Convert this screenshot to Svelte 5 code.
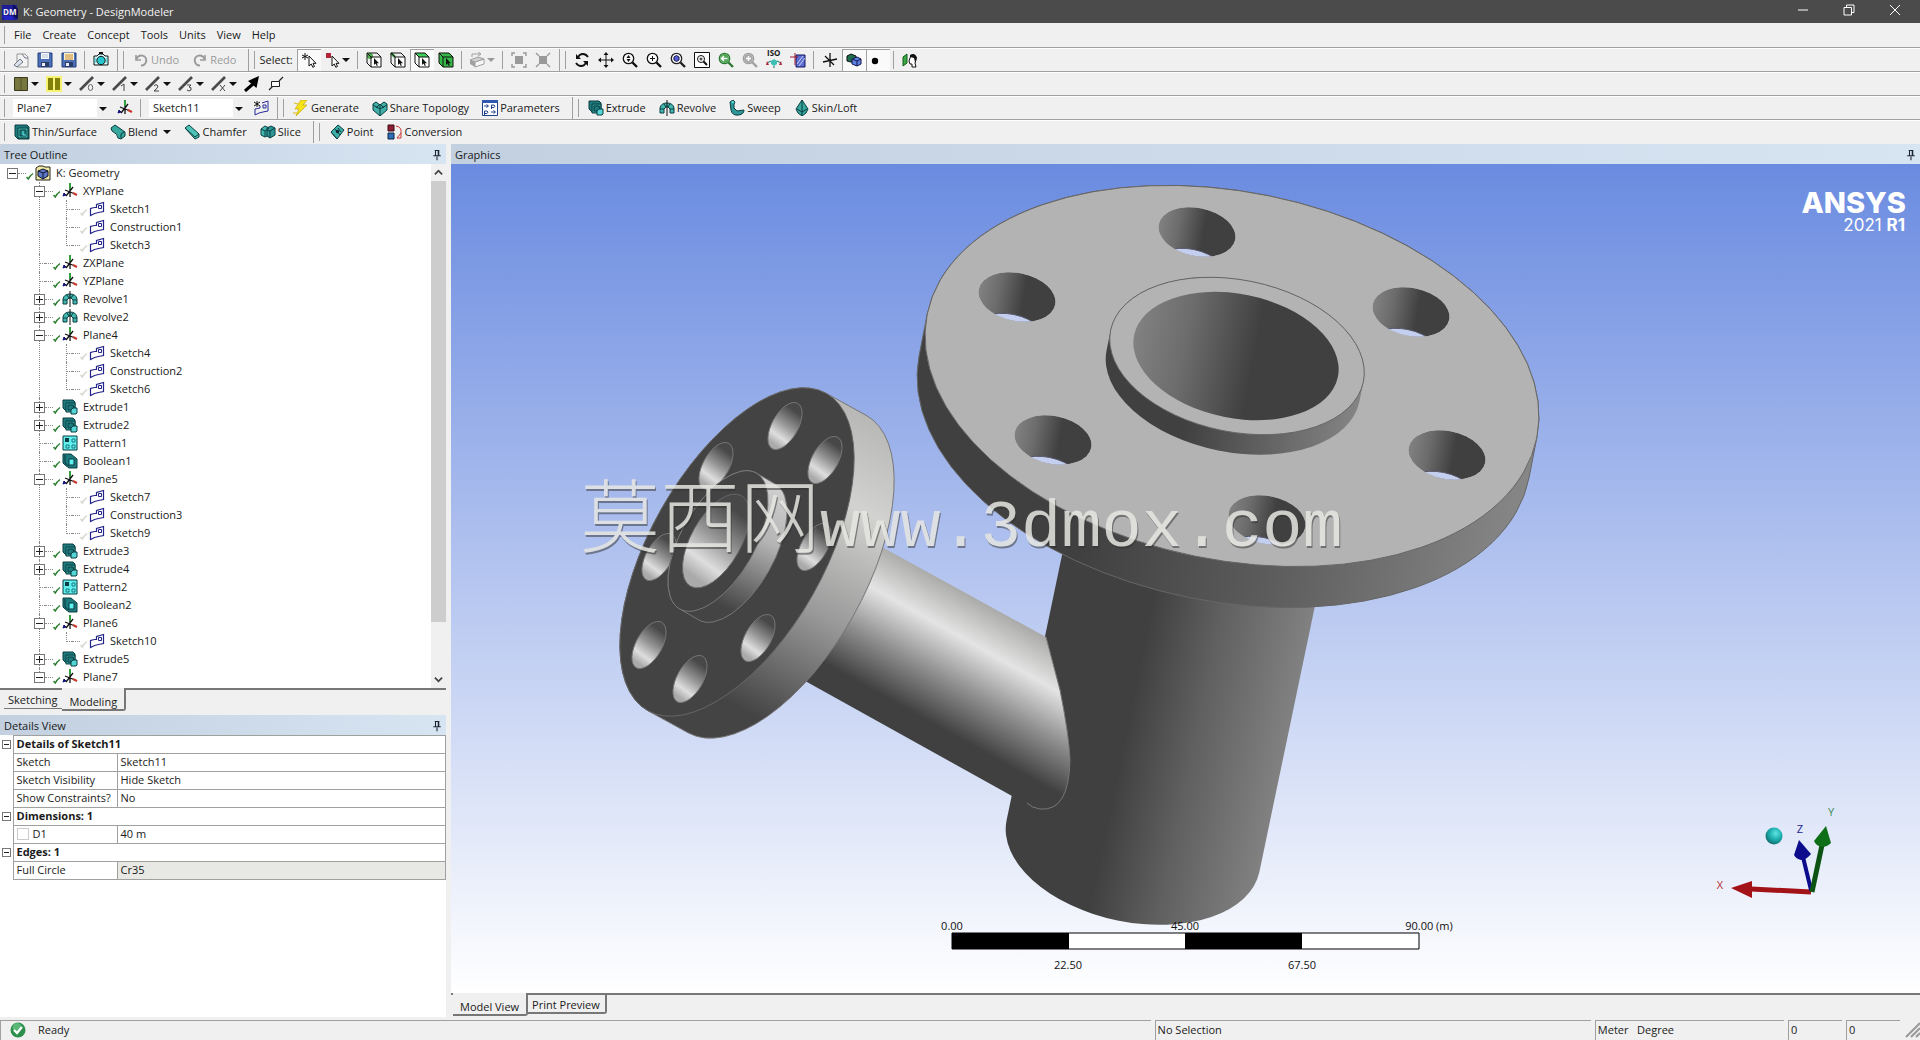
<script>
	const menus = ['File', 'Create', 'Concept', 'Tools', 'Units', 'View', 'Help'];

	const axes =
		'<path d="M3 7l10 4M11 4l-7 9M8 2v12" stroke="#111" stroke-width="1.3"/><path d="M8 0v6" stroke="#2f9e3c" stroke-width="2"/><path d="M11 10l4 2" stroke="#c8382c" stroke-width="2"/><path d="M1 13l1-3 2 2z" fill="#14147a" stroke="#14147a"/>';
	const cursor = '<path d="M8 4v10l2.3-2 1.5 3.3 1.7-.8-1.5-3.2H15z" fill="#fff" stroke="#111"/>';
	const cube = (faces) =>
		`${faces}<path d="M5 5h10v10H5zM5 5L1 1h10l4 4M1 1v10l4 4" stroke="#111"/><path d="M8 6v7l1.6-1.4 1.2 2.4 1-.6-1.1-2.2H13z" fill="#111"/>`;
	const lens = (color, inner) =>
		`<circle cx="6.5" cy="6.5" r="5.2" stroke="${color}" stroke-width="1.3" fill="#fafafa"/><path d="M10.5 10.5L15 15" stroke="${color}" stroke-width="2.4"/>${inner}`;
	const edge = (mark) => `<path d="M1 14L14 1" stroke="#4a4a4a" stroke-width="2.6"/>${mark}`;
	const floppy =
		'<path d="M1 1h14v14H1z" fill="#4d6fb5" stroke="#233f7d"/><path d="M4 10h8v5H4z" fill="#2b3d66"/><path d="M5 11h3v3H5z" fill="#eef"/>';
	const extrude =
		'<path d="M1 1h10l2 2v9h-9l-3-3z" fill="#1d7a7c" stroke="#0a3d40"/><path d="M4 4h9v9H4z" fill="#2f9797" stroke="#0a3d40"/><path d="M6 6h5l1 4-4 1-2 0z" fill="#1d7a7c" stroke="#0a3d40"/><path d="M9 11l2-2h4v5l-1 1H9z" fill="#54d6d6" stroke="#0a3d40"/>';
	const revolve =
		'<path d="M1 13V8q1-5 7-5 6 0 7 5v5l-4 0V9l-2-2H7L5 9v4z" fill="#42b8b0" stroke="#0a3d40"/><path d="M5 9l-4 0M11 9h4M5 4l2 3M11 4L9 7" stroke="#0a3d40"/><path d="M8 0v16" stroke="#111"/>';

	const icons = {
		dm: '<path d="M0 1h15v15H0z" fill="#1c1c96"/><path d="M11 0l5 5v10l-5-3z" fill="#0d0d5c"/><path d="M0 12h11v4H3z" fill="#2424c4"/>',
		fresh: '<path d="M4 2h8l3 3v10H4z" fill="#f3f3f3" stroke="#999"/><path d="M1 13l6-6 3 3-6 5z" fill="#dde3ee" stroke="#6d7685"/><path d="M9 2l3 4h3" stroke="#778"/>',
		save: `${floppy}<path d="M4 1h8v6H4z" fill="#f5f7fb"/><path d="M5 3h6M5 5h6" stroke="#b9c5dd"/>`,
		saveAll: `${floppy}<path d="M3 1h10v7H3z" fill="#fbf3d8"/><path d="M4 3h8M4 5h8M4 7h8" stroke="#c58a2a"/>`,
		camera: '<path d="M1 4h3l2-2h4l2 2h3v9H1z" fill="#dff" stroke="#111"/><path d="M6 0h4v2H6z" fill="#111"/><circle cx="8" cy="8.5" r="4.2" fill="#26c6cf" stroke="#111"/><path d="M2 6v5M14 6v5" stroke="#28b3bb"/>',
		undo: '<path d="M3 3v5h5" stroke="#9a9a9a" stroke-width="1.6"/><path d="M3.5 7A5 5 0 1 1 8 13.5" stroke="#9a9a9a" stroke-width="2"/>',
		redo: '<path d="M13 3v5H8" stroke="#9a9a9a" stroke-width="1.6"/><path d="M12.5 7A5 5 0 1 0 8 13.5" stroke="#9a9a9a" stroke-width="2"/>',
		pick: `<path d="M4 1v7M1 3l6 3M7 3L1 6" stroke="#111"/>${cursor}`,
		pickBox: `<path d="M2 1h5v5H2z" fill="#b02638"/>${cursor}`,
		selPoint: cube('<path d="M5 5h10v10H5z" fill="#fff"/><circle cx="4" cy="4" r="3" fill="#4fae4f"/>'),
		selEdge: cube('<path d="M5 5h10v10H5z" fill="#fff"/><path d="M1 1l4 4" stroke="#3a9c46" stroke-width="2.5"/>'),
		selFace: cube('<path d="M5 5h10v10H5z" fill="#fff"/><path d="M1 1h10l4 4H5z" fill="#3fcf5a"/>'),
		selBody: cube('<path d="M1 1h10l4 4v10H5l-4-4z" fill="#35b848"/>'),
		extend: '<path d="M1 8l5 2v5l-5-3z" fill="#a0a0a0"/><path d="M6 10l9-3v5l-9 3z" fill="#f6f6f6" stroke="#a0a0a0"/><path d="M1 8l8-3 6 2-9 3z" fill="#d0d0d0" stroke="#a0a0a0"/><path d="M3 5V2h8M9 0l3 2-3 2" stroke="#a0a0a0"/>',
		boxOut: '<path d="M4 4h8v8H4z" fill="#999"/><path d="M1 4V1h3M12 1h3v3M15 12v3h-3M4 15H1v-3" stroke="#999" stroke-width="1.4"/>',
		boxIn: '<path d="M4 4h8v8H4z" fill="#999"/><path d="M1 1l3 3M15 1l-3 3M1 15l3-3M15 15l-3-3" stroke="#999" stroke-width="1.4"/>',
		rotate: '<path d="M4 6q1-4 5-4 3 0 5 3M12 10q-1 4-5 4-3 0-5-3" stroke="#111" stroke-width="1.8"/><path d="M2 2v5h5zM14 14V9H9z" fill="#111"/>',
		pan: '<path d="M8 2v12M2 8h12" stroke="#111"/><path d="M8 0l2.5 3h-5zM8 16l2.5-3h-5zM0 8l3-2.500v5zM16 8l-3-2.500v5z" fill="#111"/>',
		zoom: lens('#111', '<path d="M6.5 3l2 3h-4zM6.5 10l2-3h-4z" fill="#111"/>'),
		zoomBox: lens('#111', '<path d="M6.5 4v5M4 6.5h5" stroke="#111"/>'),
		zoomFit: lens('#222', '<path d="M4 5l2.5-1.5L9 5v3L6.5 9.5 4 8z" fill="#5560d8" stroke="#15154f"/>'),
		magnify: '<path d="M.5.5h15v15H.5z" fill="#fff" stroke="#111"/><circle cx="7" cy="7" r="3.5" stroke="#111"/><path d="M9.5 9.5L13 13" stroke="#111" stroke-width="2"/><path d="M5.5 7h3M7 5.5v3" stroke="#111"/>',
		prev: lens('#2d7a35', '<circle cx="6.5" cy="6.5" r="4.5" fill="#4ba552"/><path d="M9.5 6.5H4M6 4L3.5 6.5 6 9" stroke="#fff" stroke-width="1.5"/>'),
		next: lens('#a0a0a0', '<circle cx="6.5" cy="6.5" r="4.5" fill="#a8a8a8"/><path d="M4 6.5h5M6.5 4v5" stroke="#fff" stroke-width="1.5"/>'),
		iso: '<path d="M8 7l3 2v3l-3 2-3-2V9z" fill="#3cc0b4"/><path d="M8 14v2M5 9L1 11M11 9l4 2" stroke="#176b6b"/><path d="M1 9l2 4H0zM15 9l1 4h-3z" fill="#b02638"/>',
		look: '<path d="M6 3h9v12H6z" fill="#5c6fd0" stroke="#151560"/><path d="M7 12l6-8M9 14l6-8" stroke="#c5ccf5"/><path d="M0 5h8M5 1v12" stroke="#a01830"/>',
		axis: '<path d="M1 10l14-3M3 4l9 9M8 1v14" stroke="#111" stroke-width="1.3"/>',
		solid: '<path d="M1 4l4-2 5 2v7l-5-1-4-1z" fill="#1f6e4d" stroke="#111"/><path d="M6 7l5-2 4 2v5l-4 2-5-2z" fill="#5b82e0" stroke="#15154f"/><path d="M11 9v5M6 7l5 2 4-2" stroke="#15154f"/>',
		dot: '<circle cx="5" cy="9" r="3.2" fill="#000"/>',
		lookFace: '<path d="M1 5l4-3v9l-4 3z" fill="#3aa744" stroke="#125c1a"/><path d="M8 6q1-3 4-3 3 1 2 5l-1 3 1 4h-4v-3H8l-1-3z" fill="#fff" stroke="#111"/><path d="M8 3q5-3 7 3l-2 4-1-4-4-1z" fill="#111"/>',
		swatchDark: '<path d="M1.5 1.5h13v13h-13z" fill="#76763e" stroke="#3a3a1c"/><path d="M8 2v12" stroke="#54542a"/>',
		swatchYellow: '<path d="M0 0h16v16H0z" fill="#f6f272"/><path d="M2 2h5v12H2zM9 2h5v12H9z" fill="#80800a"/>',
		edge0: edge('<ellipse cx="11.5" cy="11.5" rx="2.2" ry="3" stroke="#666"/>'),
		edge1: edge('<path d="M9 10l3-2v7" stroke="#444"/>'),
		edge2: edge('<path d="M9 10q2-3 4 0 0 2-4 5h5" stroke="#444"/>'),
		edge3: edge('<path d="M9 9h4l-2 2q3 0 2 3-2 2-4 0" stroke="#444"/>'),
		edgeX: edge('<path d="M9 9l5 6M14 9l-5 6" stroke="#444"/>'),
		arrow: '<path d="M1 15L9 8" stroke="#000" stroke-width="3"/><path d="M15 0l-2.5 12L4 5z" fill="#000"/>',
		node: '<path d="M1 14l4-4M11 5l4-4" stroke="#222" stroke-width="1.2"/><path d="M3.5 5.5h8v5h-8z" fill="#fff" stroke="#222"/>',
		axes,
		newSketch:
			'<path d="M4 1v6M1 2l6 4M7 2L1 6" stroke="#111"/><path d="M2 15V9l5-1V6M9 3l6-2v10l-5 1-4 1-4 2" stroke="#2a2a9c"/><path d="M10 5h3v3h-3z" stroke="#2a2a9c"/>',
		generate: '<path d="M8 0h6l-4 5h4L3 16l3-7H2z" fill="#f5e31c" stroke="#c9a800" stroke-width=".7"/><path d="M5 4L1 3M4 13H0" stroke="#d8be10"/>',
		share: '<path d="M1 4l3-2 4 3 4-3 3 2v6l-7 6-7-6z" fill="#42b0a8" stroke="#0a3d40"/><path d="M8 5v10M1 5l7 4 7-4M4 8l4-4 4 4" stroke="#0a3d40"/>',
		params: '<path d="M.5.5h15v15H.5z" fill="#fff" stroke="#20408c"/><path d="M0 0h16v3H0z" fill="#2f58b0"/><path d="M2 6h4M4.5 4.500L6.5 6 4.5 7.500M9.5 9V5H12q2 1 0 2.500H9.5M2.5 15v-4H5q2 1 0 2.500H2.5M9 12h4M11.5 10.500l2 1.500-2 1.500" stroke="#20408c"/>',
		extrude,
		revolve,
		sweep: '<path d="M1 2l4 1v5l3 3 7-1q0 4-5 5-7 1-8-5z" fill="#2f9797" stroke="#0a3d40"/><path d="M1 2l3-2 2 2-1 2" fill="#54d6d6" stroke="#0a3d40"/>',
		skin: '<path d="M8 0l6 9-2 4-4 3-4-3-2-4z" fill="#35a79c" stroke="#0a3d40"/><path d="M8 0v16M3 9l5 3 5-3" stroke="#0a3d40"/>',
		thin: '<path d="M1 1h12l2 2v12H4l-3-3z" fill="#1d7a7c" stroke="#0a3d40"/><path d="M4 4h10v10H4z" fill="#42b8b0" stroke="#0a3d40"/><path d="M6 6h6v6H6z" fill="#1d7a7c" stroke="#0a3d40"/><path d="M9 7v4h3" stroke="#6ee"/>',
		blend: '<path d="M1 4l4-3 10 7v4l-4 3-3-1q0-4-6-7z" fill="#35a79c" stroke="#0a3d40"/><path d="M11 14v-4l3-2" stroke="#0a3d40"/>',
		chamfer: '<path d="M1 4l4-3 10 9v3l-4 2z" fill="#4cc4b8" stroke="#0a3d40"/><path d="M1 4l10 9 4-3" stroke="#0a3d40"/>',
		slice: '<path d="M1 5l4-3 4 2v7l-4 2-4-2z" fill="#42b8b0" stroke="#0a3d40"/><path d="M7 4l4-2 4 2v7l-5 3-3-2z" fill="#2f9797" stroke="#0a3d40"/><path d="M1 5l4 2 4-3M5 7v6M7 6l3 1 5-3M10 7v7" stroke="#0a3d40"/>',
		point: '<path d="M2 8l7-7 6 5-7 9z" fill="#3cb0a8" stroke="#0a3d40"/><path d="M2 8l6 7M6 5l5 6M9 4l3 4" stroke="#0a3d40"/><circle cx="8.5" cy="7.5" r="1.7" fill="#123"/>',
		conversion: '<path d="M1 1h6v6H1z" fill="#8c1f34" stroke="#3d0a14"/><path d="M1 9h6v6H1z" fill="#2f6db5" stroke="#0a234a"/><path d="M9 2q6 1 5 7l-4 5M14 9v5h-4" stroke="#c33"/>',
		root: '<path d="M1 3l3-2h4l2 1h5v13H1z" fill="#efe9a0" stroke="#222"/><path d="M3 6l5-2 5 2v5l-5 3-5-3z" fill="#5b78c8" stroke="#15152f"/><path d="M3 6l5 2 5-2M8 8v6" stroke="#15152f"/>',
		sketch: '<path d="M1.5 14.500v-7l4-1 2 0V3.500l7-2v9l-5 1-4 1z" stroke="#23238a" stroke-width="1.2"/><path d="M9.5 4.500h3v3h-3z" stroke="#23238a"/>',
		pattern: '<path d="M1 1h14v14H1z" fill="#5ff0f0" stroke="#0a3d40"/><path d="M3 3h4v4H3z" fill="#0a3d40"/><path d="M10 4h3v3h-3zM4 10h3v3H4zM10 10h3v3h-3z" stroke="#1d7a7c"/>',
		boolean: '<path d="M1 1h8l6 5v9H7l-4-3-2-2z" fill="#1d7a7c" stroke="#0a3d40"/><path d="M3 2v8l4 3" stroke="#0a3d40"/><path d="M7 6h5v6H7z" fill="#5ff0f0" stroke="#0a3d40"/>',
		check: '<path d="M1 10l3.500 4Q7 8 14 3" stroke="currentColor" stroke-width="3"/>',
		pin: '<path d="M5 2h6M6 2v7M10 2v7M3 9h10M8 10v5" stroke="#1c2430" stroke-width="1.4"/><path d="M9 2h2v7H9z" fill="#1c2430"/>',
		ready: '<circle cx="8" cy="8" r="7.5" fill="#2c8f4c"/><circle cx="7" cy="5.5" r="4.5" fill="#5bb877"/><path d="M4 8l3 3 5-6" stroke="#fff" stroke-width="2.2"/>'
	};

	// '|' is a separator; drop: has an arrow beside it; on: pressed in
	const bands = [
		[
			['fresh', 'save', 'saveAll', '|', 'camera'].map(tool),
			[tool({ icon: 'undo', text: 'Undo', off: true }), tool({ icon: 'redo', text: 'Redo', off: true })],
			[
				{ label: 'Select:' },
				{ icon: 'pick', on: true },
				{ icon: 'pickBox', drop: true },
				'|',
				'selPoint',
				'selEdge',
				{ icon: 'selFace', on: true },
				'selBody',
				'|',
				{ icon: 'extend', drop: true, off: true },
				'|',
				'boxOut',
				'boxIn'
			].map(tool),
			[
				'rotate', 'pan', 'zoom', 'zoomBox', 'zoomFit', 'magnify', 'prev', 'next', 'iso', 'look',
				'|',
				'axis',
				{ icon: 'solid', on: true },
				{ icon: 'dot', on: true },
				'|',
				'lookFace'
			].map(tool)
		],
		[
			[
				...['swatchDark', 'swatchYellow', 'edge0', 'edge1', 'edge2', 'edge3', 'edgeX'].map((icon) =>
					tool({ icon, drop: true })
				),
				tool('arrow'),
				tool('node')
			]
		],
		[
			[{ select: 'Plane7' }, 'axes', '|', { select: 'Sketch11' }, 'newSketch'].map(tool),
			[
				{ icon: 'generate', text: 'Generate' },
				{ icon: 'share', text: 'Share Topology' },
				{ icon: 'params', text: 'Parameters' }
			].map(tool),
			[
				{ icon: 'extrude', text: 'Extrude' },
				{ icon: 'revolve', text: 'Revolve' },
				{ icon: 'sweep', text: 'Sweep' },
				{ icon: 'skin', text: 'Skin/Loft' }
			].map(tool)
		],
		[
			[
				{ icon: 'thin', text: 'Thin/Surface' },
				{ icon: 'blend', text: 'Blend', drop: true },
				{ icon: 'chamfer', text: 'Chamfer' },
				{ icon: 'slice', text: 'Slice' }
			].map(tool),
			[
				{ icon: 'point', text: 'Point' },
				{ icon: 'conversion', text: 'Conversion' }
			].map(tool)
		]
	];

	function tool(item) {
		if (item === '|') return { sep: true };
		return typeof item === 'string' ? { icon: item } : item;
	}

	const plane = (name, sketches) => ({
		name,
		icon: 'axes',
		children: sketches?.map((s) => ({ name: s, icon: 'sketch', faint: true }))
	});
	const feature = (name, icon, closed = true) => ({ name, icon, closed });

	const tree = {
		name: 'K: Geometry',
		icon: 'root',
		children: [
			plane('XYPlane', ['Sketch1', 'Construction1', 'Sketch3']),
			plane('ZXPlane'),
			plane('YZPlane'),
			feature('Revolve1', 'revolve'),
			feature('Revolve2', 'revolve'),
			plane('Plane4', ['Sketch4', 'Construction2', 'Sketch6']),
			feature('Extrude1', 'extrude'),
			feature('Extrude2', 'extrude'),
			feature('Pattern1', 'pattern', false),
			feature('Boolean1', 'boolean', false),
			plane('Plane5', ['Sketch7', 'Construction3', 'Sketch9']),
			feature('Extrude3', 'extrude'),
			feature('Extrude4', 'extrude'),
			feature('Pattern2', 'pattern', false),
			feature('Boolean2', 'boolean', false),
			plane('Plane6', ['Sketch10']),
			feature('Extrude5', 'extrude'),
			plane('Plane7', [])
		]
	};

	const details = [
		{ group: 'Details of Sketch11' },
		{ name: 'Sketch', value: 'Sketch11' },
		{ name: 'Sketch Visibility', value: 'Hide Sketch' },
		{ name: 'Show Constraints?', value: 'No' },
		{ group: 'Dimensions: 1' },
		{ name: 'D1', value: '40 m', tick: true },
		{ group: 'Edges: 1' },
		{ name: 'Full Circle', value: 'Cr35', locked: true }
	];

	// Outline of an ellipse swept along (dx, dy)
	function swept(cx, cy, rx, ry, rot, dx = 0, dy = 0) {
		const r = (rot * Math.PI) / 180;
		const ux = Math.cos(r);
		const uy = Math.sin(r);
		const t = Math.atan2(ry * (-uy * dy - ux * dx), rx * (ux * dy - uy * dx));
		const ox = rx * Math.cos(t) * ux - ry * Math.sin(t) * uy;
		const oy = rx * Math.cos(t) * uy + ry * Math.sin(t) * ux;
		const sweep = -ox * dy + oy * dx > 0 ? 0 : 1;
		const arc = `A${rx} ${ry} ${rot} 0 ${sweep}`;
		return `M${cx + ox} ${cy + oy}l${dx} ${dy}${arc} ${cx - ox + dx} ${cy - oy + dy}l${-dx} ${-dy}${arc} ${cx + ox} ${cy + oy}Z`;
	}

	// Tilt of the circles on the upright pipe and on its branch
	const top = 11.5;
	const side = -60.6;

	const topHoles = [
		[1197, 232],
		[1017, 297],
		[1053, 440],
		[1411, 312],
		[1447, 455],
		[1267, 520]
	];
	const sideHoles = [
		[785, 426],
		[825, 460],
		[716, 466],
		[814, 547],
		[659, 557],
		[758, 638],
		[649, 645],
		[690, 679]
	];
</script>

{#snippet glyph(name)}
	<svg class="glyph" viewBox="0 0 16 16" fill="none" aria-hidden="true">{@html icons[name]}</svg>
{/snippet}

{#snippet node(item)}
	<li>
		<div class="node">
			{#if item.children || item.closed}
				<button class="toggle" class:closed={item.closed} aria-label="Toggle {item.name}"></button>
			{:else}
				<span class="stub"></span>
			{/if}
			<span class="dots"></span>
			<span class="check" class:faint={item.faint}>{@render glyph('check')}</span>
			{@render glyph(item.icon)}
			<span class="name">{item.name}</span>
		</div>
		{#if item.children}
			<ul>
				{#each item.children as child}
					{@render node(child)}
				{/each}
			</ul>
		{/if}
	</li>
{/snippet}

<div class="window">
	<header class="titlebar">
		<span class="logo">{@render glyph('dm')}<b>DM</b></span>
		<span class="title">K: Geometry - DesignModeler</span>
		<button aria-label="Minimize"><svg viewBox="0 0 12 12"><path d="M1 6h10" /></svg></button>
		<button aria-label="Restore"
			><svg viewBox="0 0 12 12"><path d="M1 3.5h7.5v7.5H1zM3.5 3V1H11v7.5H9" /></svg></button
		>
		<button aria-label="Close"><svg viewBox="0 0 12 12"><path d="M1 1l10 10M11 1L1 11" /></svg></button>
	</header>

	<nav class="menubar">
		<span class="grip"></span>
		{#each menus as menu}
			<button>{menu}</button>
		{/each}
	</nav>

	{#each bands as row}
		<div class="toolbar" role="toolbar">
			{#each row as band}
				<div class="band">
					<span class="grip"></span>
					{#each band as t}
						{#if t.sep}
							<span class="sep"></span>
						{:else if t.label}
							<span class="label">{t.label}</span>
						{:else if t.select}
							<span class="picker">
								<select aria-label="Active {t.select}"><option>{t.select}</option></select>
							</span>
						{:else}
							<button
								class="tool"
								class:wide={t.text}
								class:drop={t.drop}
								class:on={t.on}
								disabled={t.off}
								aria-label={t.text ?? t.icon}
							>
								{#if t.icon === 'iso'}<span class="iso">ISO</span>{/if}
								{@render glyph(t.icon)}
								{#if t.text}<span>{t.text}</span>{/if}
								{#if t.drop}<i class="caret"></i>{/if}
							</button>
						{/if}
					{/each}
				</div>
			{/each}
		</div>
	{/each}

	<main>
		<aside>
			<section class="outline">
				<h2>Tree Outline {@render glyph('pin')}</h2>
				<div class="tree-box">
					<ul class="tree">{@render node(tree)}</ul>
					<div class="scrollbar">
						<button aria-label="Scroll up"><svg viewBox="0 0 10 10"><path d="M1 7l4-4 4 4" /></svg></button>
						<div class="track"><div class="thumb"></div></div>
						<button aria-label="Scroll down"><svg viewBox="0 0 10 10"><path d="M1 3l4 4 4-4" /></svg></button>
					</div>
				</div>
				<div class="tabs">
					<button class="tab">Sketching</button>
					<button class="tab active">Modeling</button>
				</div>
			</section>

			<section class="details">
				<h2>Details View {@render glyph('pin')}</h2>
				<div class="details-box">
					<table>
						<colgroup><col class="gutter-col" /><col class="key-col" /><col /></colgroup>
						<tbody>
							{#each details as d}
								<tr>
									{#if d.group}
										<td class="gutter"><button class="toggle" aria-label="Toggle {d.group}"></button></td>
										<th colspan="2">{d.group}</th>
									{:else}
										<td class="gutter"></td>
										<td>
											{#if d.tick}
												<label><input type="checkbox" />{d.name}</label>
											{:else}
												{d.name}
											{/if}
										</td>
										<td class:locked={d.locked}>{d.value}</td>
									{/if}
								</tr>
							{/each}
						</tbody>
					</table>
				</div>
			</section>
		</aside>

		<section class="graphics">
			<h2>Graphics {@render glyph('pin')}</h2>
			<div class="canvas">
				<svg class="scene" viewBox="451 164 1469 829" preserveAspectRatio="xMidYMid slice">
					<defs>
						<linearGradient id="rim" gradientUnits="userSpaceOnUse" x1="917" y1="400" x2="1538" y2="526">
							<stop offset="0.3" stop-color="#404040" />
							<stop offset="0.6" stop-color="#5c5c5c" />
							<stop offset="1" stop-color="#8a8a8a" />
						</linearGradient>
						<linearGradient id="collar" gradientUnits="userSpaceOnUse" x1="1105" y1="350" x2="1364" y2="402">
							<stop offset="0.35" stop-color="#404040" />
							<stop offset="1" stop-color="#868686" />
						</linearGradient>
						<linearGradient id="bore" x1="0" y1="0" x2="1" y2="0.12">
							<stop offset="0" stop-color="#858585" />
							<stop offset="0.3" stop-color="#6c6c6c" />
							<stop offset="0.64" stop-color="#404040" />
						</linearGradient>
						<linearGradient id="trunk" gradientUnits="userSpaceOnUse" x1="1037" y1="740" x2="1290" y2="792">
							<stop offset="0.33" stop-color="#404040" />
							<stop offset="0.6" stop-color="#606060" />
							<stop offset="1" stop-color="#868686" />
						</linearGradient>
						<linearGradient id="branch" gradientUnits="userSpaceOnUse" x1="887" y1="550" x2="812" y2="684">
							<stop offset="0" stop-color="#acacaa" />
							<stop offset="0.26" stop-color="#e4e4e4" />
							<stop offset="0.55" stop-color="#8e8e8e" />
							<stop offset="0.84" stop-color="#404040" />
						</linearGradient>
						<linearGradient id="sideRim" gradientUnits="userSpaceOnUse" x1="880" y1="410" x2="712" y2="712">
							<stop offset="0" stop-color="#b4b4b2" />
							<stop offset="0.28" stop-color="#d2d2d0" />
							<stop offset="0.6" stop-color="#9a9a9a" />
							<stop offset="0.95" stop-color="#444" />
						</linearGradient>
						<linearGradient id="sideCollar" gradientUnits="userSpaceOnUse" x1="786" y1="480" x2="722" y2="606">
							<stop offset="0" stop-color="#d4d4d4" />
							<stop offset="0.45" stop-color="#b4b4b4" />
							<stop offset="1" stop-color="#444" />
						</linearGradient>
						<linearGradient id="sideHole" x1="0.75" y1="0.1" x2="0.3" y2="0.95">
							<stop offset="0.05" stop-color="#484848" />
							<stop offset="0.45" stop-color="#949494" />
							<stop offset="0.78" stop-color="#dedede" />
							<stop offset="1" stop-color="#aaa" />
						</linearGradient>
						<radialGradient id="ball" cx="0.6" cy="0.35" r="0.7">
							<stop offset="0" stop-color="#5fe3e3" />
							<stop offset="0.5" stop-color="#1fb0b0" />
							<stop offset="1" stop-color="#0e6868" />
						</radialGradient>
						{#each topHoles as [x, y], i}
							<clipPath id="hole{i}"><path d={swept(x, y, 39, 24, top)} /></clipPath>
						{/each}
					</defs>

					<path d={swept(1222, 420, 129, 76, top, -89, 426)} fill="url(#trunk)" />
					<path
						d="M860 535L1046 637L1060 690Q1069 735 1070 760Q1069 812 1040 809Q1026 806 1012 796L780 667Z"
						fill="url(#branch)"
					/>
					<path d="M1046 637L1060 690Q1069 735 1070 760Q1069 812 1040 809Q1032 808 1027 803" stroke="#777" />

					<path d={swept(1232, 376, 311, 184, top, -8, 41)} fill="url(#rim)" stroke="#666" />
					<path d={swept(1232, 376, 311, 184, top)} fill="#b3b3b3" stroke="#666" />
					{#each topHoles as [x, y], i}
						<g clip-path="url(#hole{i})">
							<path d={swept(x, y, 39, 24, top)} fill="url(#bore)" />
							<path d={swept(x - 8, y + 41, 39, 24, top)} fill="#c4cff0" stroke="#556" />
						</g>
					{/each}
					<path d={swept(1237, 356, 129, 76, top, -4, 20)} fill="url(#collar)" />
					<path d={swept(1237, 356, 129, 76, top)} fill="#b3b3b3" stroke="#666" />
					<path d={swept(1236, 356, 104, 62, top)} fill="url(#bore)" />

					<path d={swept(737, 552, 182, 87, side, 40, 22)} fill="url(#sideRim)" stroke="#777" />
					<path d={swept(737, 552, 182, 87, side)} fill="#434343" stroke="#666" />
					{#each sideHoles as [x, y]}
						<path d={swept(x, y, 26, 13, side)} fill="url(#sideHole)" stroke="#777" />
					{/each}
					<path d={swept(718, 541, 78, 37, side, 19, 11)} fill="url(#sideCollar)" stroke="#777" />
					<path d={swept(718, 541, 78, 37, side)} fill="#434343" stroke="#777" />
					<path d={swept(716, 541, 52, 25, side)} fill="url(#sideHole)" stroke="#666" />

					<text class="mark han" x="580" y="546">莫西网</text>
					<text class="mark latin" x="820" y="546">www.3dmox.com</text>

					<text class="brand" x="1906" y="213">ANSYS</text>
					<text class="release" x="1905" y="231">2021 <tspan class="heavy">R1</tspan></text>

					<g class="ruler">
						<path d="M952 933h467v16h-467z" fill="#fff" stroke="#000" />
						<path d="M952 933h117v16h-117zM1185 933h117v16h-117z" fill="#000" />
						<text x="952" y="930">0.00</text>
						<text x="1185" y="930">45.00</text>
						<text x="1429" y="930">90.00 (m)</text>
						<text x="1068" y="969">22.50</text>
						<text x="1302" y="969">67.50</text>
					</g>

					<g class="triad">
						<path d="M1811 892L1751 889" stroke="#a31217" stroke-width="5" />
						<path d="M1731 888l21-7v17z" fill="#a31217" />
						<path d="M1811 890L1803 857" stroke="#0c0c8c" stroke-width="4" />
						<path d="M1799 840l12 14q-5 6-10 6-5-1-7-5z" fill="#0c0c8c" />
						<path d="M1812 892L1822 845" stroke="#0d5414" stroke-width="5" />
						<path d="M1826 826l5 17q-4 4-9 4-6-1-8-6z" fill="#0f6f18" />
						<circle cx="1774" cy="836" r="8.5" fill="url(#ball)" />
						<text x="1720" y="889" fill="#b5303a">X</text>
						<text x="1831" y="816" fill="#3b8c55">Y</text>
						<text x="1800" y="833" fill="#22228c">Z</text>
					</g>
				</svg>
			</div>
			<div class="tabs">
				<button class="tab active">Model View</button>
				<button class="tab">Print Preview</button>
			</div>
		</section>
	</main>

	<footer>
		<span class="cell ready">{@render glyph('ready')}Ready</span>
		<span class="cell">No Selection</span>
		<span class="cell">Meter&nbsp;&nbsp; Degree</span>
		<span class="cell">0</span>
		<span class="cell">0</span>
		<svg class="corner" viewBox="0 0 16 18"><path d="M2 17L16 3M7 17l9-9M12 17l4-4" /></svg>
	</footer>
</div>

<style>
	:global(body) {
		margin: 0;
		overflow: hidden;
	}

	.window {
		display: flex;
		flex-direction: column;
		height: 100vh;
		background: #f0f0f0;
		color: #1a1a1a;
		font-family: 'Open Sans', 'Noto Sans', sans-serif;
		font-size: 11px;
		line-height: 16px;
	}

	button,
	select {
		font: inherit;
		color: inherit;
		background: none;
		border: 0;
		padding: 0;
		margin: 0;
	}

	.glyph {
		width: 16px;
		height: 16px;
		flex: none;
	}

	.titlebar {
		display: flex;
		align-items: center;
		height: 23px;
		flex: none;
		padding: 0 2px;
		background: #4b4b4b;
		color: #f4f4f4;
	}

	.logo {
		position: relative;
		height: 16px;
		margin-right: 5px;
	}

	.logo b {
		position: absolute;
		left: 1px;
		top: 0;
		font-size: 8px;
	}

	.title {
		flex: 1;
	}

	.titlebar button {
		width: 46px;
		height: 20px;
	}

	.titlebar button svg {
		width: 12px;
		height: 12px;
		fill: none;
		stroke: #fff;
	}

	.menubar {
		display: flex;
		align-items: center;
		height: 24px;
		flex: none;
		border-bottom: 1px solid #a0a0a0;
	}

	.menubar button {
		padding: 0 6px 0 5px;
	}

	.grip {
		width: 1px;
		height: 18px;
		margin: 0 4px;
		background: #a0a0a0;
		flex: none;
	}

	.toolbar {
		display: flex;
		height: 22px;
		flex: none;
		border-top: 1px solid #fff;
		border-bottom: 1px solid #a0a0a0;
	}

	.toolbar:last-of-type {
		border-bottom-color: #f0f0f0;
	}

	.band {
		display: flex;
		align-items: center;
		padding-right: 4px;
		border-right: 1px solid #a0a0a0;
		margin-right: 1px;
	}

	.band:last-child {
		border-right: 0;
	}

	.sep {
		width: 1px;
		height: 18px;
		margin: 0 4px 0 3px;
		background: #a0a0a0;
	}

	.label {
		margin-right: 4px;
	}

	.tool {
		display: flex;
		align-items: center;
		justify-content: center;
		position: relative;
		width: 24px;
		height: 22px;
	}

	.tool.drop {
		width: 33px;
		gap: 2px;
	}

	.tool.wide {
		width: auto;
		gap: 2px;
		padding: 0 8px 0 5px;
	}

	.tool.on {
		background: #fafafa;
		box-shadow: inset 1px 1px #a0a0a0;
	}

	.tool:disabled {
		color: #9a9a9a;
	}

	.caret {
		border: 4px solid transparent;
		border-top-color: #111;
		border-bottom: 0;
	}

	.wide .caret {
		margin-left: 4px;
	}

	.tool:disabled .caret {
		border-top-color: #999;
	}

	.iso {
		position: absolute;
		top: 0;
		font-size: 8px;
		line-height: 8px;
		font-weight: 700;
	}

	.picker {
		position: relative;
		margin: 0 4px;
	}

	.picker select {
		appearance: none;
		width: 96px;
		height: 18px;
		padding: 0 4px;
		background: linear-gradient(90deg, #fff 84px, #f0f0f0 84px);
	}

	.picker::after {
		content: '';
		position: absolute;
		right: 2px;
		top: 8px;
		border: 4px solid transparent;
		border-top-color: #111;
		border-bottom: 0;
		pointer-events: none;
	}

	main {
		display: flex;
		flex: 1;
		min-height: 0;
		gap: 5px;
	}

	h2 {
		display: flex;
		align-items: center;
		justify-content: space-between;
		box-sizing: border-box;
		height: 20px;
		flex: none;
		margin: 0;
		padding: 2px 3px 0 4px;
		background: linear-gradient(90deg, #c2d0df, #d7e4f2);
		font-size: 11px;
		font-weight: 400;
	}

	h2 .glyph {
		width: 12px;
		height: 12px;
	}

	aside {
		display: flex;
		flex-direction: column;
		width: 446px;
		flex: none;
	}

	.outline {
		display: flex;
		flex-direction: column;
		flex: 1;
		min-height: 0;
	}

	.tree-box {
		display: flex;
		flex: 1;
		min-height: 0;
		background: #fff;
		border-bottom: 2px solid #777;
	}

	ul {
		list-style: none;
		margin: 0;
		padding: 0;
	}

	.tree {
		flex: 1;
		overflow: hidden;
	}

	.tree ul {
		margin-left: 27px;
	}

	li {
		position: relative;
	}

	.tree ul > li::before {
		content: '';
		position: absolute;
		left: 12px;
		top: 0;
		bottom: 0;
		border-left: 1px dotted #888;
	}

	.tree ul > li:last-child::before {
		bottom: auto;
		height: 10px;
	}

	.node {
		display: flex;
		align-items: center;
		height: 18px;
		padding-left: 7px;
	}

	.toggle {
		position: relative;
		width: 11px;
		height: 11px;
		flex: none;
		border: 1px solid #777;
		background: linear-gradient(#222, #222) center / 7px 1px no-repeat #fff;
	}

	.toggle.closed {
		background:
			linear-gradient(#222, #222) center / 7px 1px no-repeat,
			linear-gradient(#222, #222) center / 1px 7px no-repeat,
			#fff;
	}

	.stub {
		width: 5px;
		margin-left: 6px;
		border-top: 1px dotted #888;
	}

	.dots {
		width: 8px;
		border-top: 1px dotted #888;
	}

	.check {
		display: flex;
		color: #2f7d32;
		margin-right: 1px;
		padding-top: 6px;
	}

	.check .glyph {
		width: 8px;
		height: 8px;
	}

	.check.faint {
		color: #d4d8cc;
	}

	.name {
		margin-left: 5px;
		white-space: nowrap;
	}

	.scrollbar {
		display: flex;
		flex-direction: column;
		width: 15px;
		background: #f0f0f0;
	}

	.scrollbar button {
		height: 17px;
		line-height: 0;
	}

	.scrollbar svg {
		width: 9px;
		height: 9px;
		fill: none;
		stroke: #444;
		stroke-width: 2;
	}

	.track {
		flex: 1;
	}

	.thumb {
		height: 90%;
		background: #cdcdcd;
	}

	.tabs {
		display: flex;
		align-items: flex-start;
		height: 25px;
		flex: none;
		padding-left: 4px;
	}

	.tab {
		height: 19px;
		padding: 2px 5px 0 4px;
		border-bottom: 1px solid #777;
	}

	.tab.active {
		height: 23px;
		margin-top: -2px;
		padding: 6px 7px 0 7px;
		background: #f0f0f0;
		border-right: 2px solid #777;
		border-bottom: 2px solid #777;
		border-radius: 0 0 3px 0;
	}

	.graphics .tabs {
		height: 22px;
		padding-left: 2px;
	}

	.graphics .tab {
		border-right: 2px solid #777;
		border-bottom: 2px solid #777;
		border-radius: 0 0 3px 0;
	}

	.details {
		display: flex;
		flex-direction: column;
		flex: 0 0 302px;
	}

	.details-box {
		flex: 1;
		background: #fff;
	}

	table {
		width: 100%;
		border-collapse: collapse;
		table-layout: fixed;
	}

	.gutter-col {
		width: 13px;
	}

	.key-col {
		width: 104px;
	}

	td,
	th {
		height: 15px;
		padding: 0 0 2px 3px;
		border: 1px solid #a0a0a0;
		line-height: 15px;
		text-align: left;
		white-space: nowrap;
	}

	td.gutter {
		padding: 0 0 0 2px;
		border: 0;
	}

	.gutter .toggle {
		display: block;
		width: 9px;
		height: 9px;
		background-size: 5px 1px;
	}

	td label {
		display: flex;
		align-items: center;
		gap: 4px;
	}

	td input {
		appearance: none;
		width: 12px;
		height: 12px;
		margin: 0;
		border: 1px solid #ccc;
	}

	td.locked {
		background: #e8e8e4;
	}

	.graphics {
		display: flex;
		flex-direction: column;
		flex: 1;
		min-width: 0;
	}

	.canvas {
		flex: 1;
		min-height: 0;
		background: linear-gradient(#6a8be0, #fff);
		border-bottom: 2px solid #777;
	}

	.scene {
		display: block;
		width: 100%;
		height: 100%;
		fill: none;
	}

	.scene text {
		fill: #111;
	}

	.scene .mark {
		fill: #e6e6e2;
		opacity: 0.85;
		text-shadow: 1px 2px 0 rgba(50, 50, 50, 0.6);
	}

	.han {
		font: 300 80px 'Noto Sans CJK SC', sans-serif;
	}

	.latin {
		font: 67px 'Liberation Mono', monospace;
	}

	.scene .brand {
		font: 800 29px Inter, sans-serif;
		fill: #fff;
		text-anchor: end;
	}

	.scene .release {
		font: 17px Inter, sans-serif;
		fill: #fff;
		text-anchor: end;
	}

	.heavy {
		font-weight: 700;
	}

	.ruler text,
	.triad text {
		text-anchor: middle;
	}

	.triad text[fill='#b5303a'] {
		fill: #b5303a;
	}

	.triad text[fill='#3b8c55'] {
		fill: #3b8c55;
	}

	.triad text[fill='#22228c'] {
		fill: #22228c;
	}

	footer {
		display: grid;
		grid-template-columns: 1150fr 436fr 189fr 54fr 54fr 16px;
		gap: 4px;
		height: 20px;
		flex: none;
		margin-top: 3px;
	}

	.cell {
		display: flex;
		align-items: center;
		box-sizing: border-box;
		border-top: 1px solid #a0a0a0;
		border-left: 1px solid #a0a0a0;
		padding: 0 0 1px 2px;
	}

	.ready {
		gap: 12px;
		padding-left: 9px;
	}

	.corner {
		width: 16px;
		height: 18px;
		fill: none;
		stroke: #999;
		stroke-width: 2;
	}
</style>
